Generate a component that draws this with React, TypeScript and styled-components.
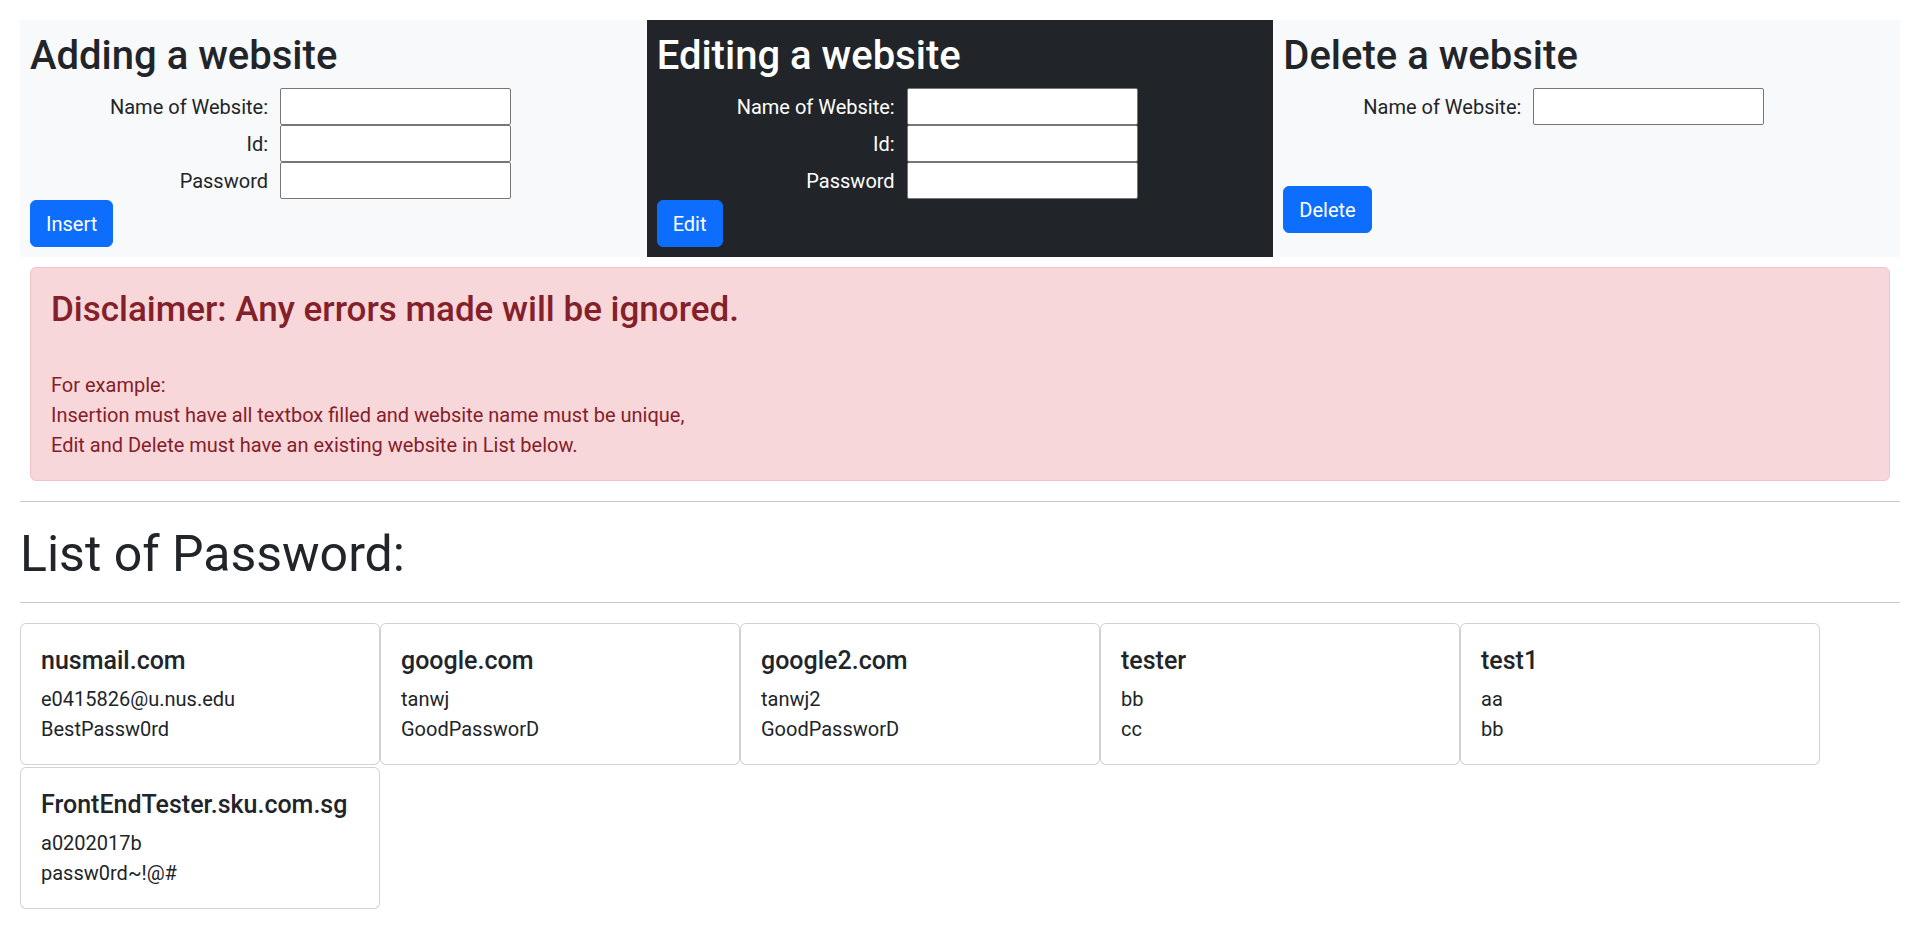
import React from "react";
import styled, { createGlobalStyle } from "styled-components";

const GlobalStyle = createGlobalStyle`
  html, body {
    margin: 0;
    padding: 0;
    background: #ffffff;
  }
  body {
    font-family: Roboto, "Noto Sans", "Liberation Sans", sans-serif;
    font-size: 20px;
    line-height: 30px;
    color: #212529;
  }
  *, *::before, *::after { box-sizing: border-box; }
`;

const Page = styled.div`
  padding: 20px;
`;

const TopRow = styled.div`
  display: grid;
  grid-template-columns: repeat(3, 1fr);
`;

const Panel = styled.section<{ $dark?: boolean }>`
  padding: 10px;
  background: ${(p) => (p.$dark ? "#212529" : "#f8f9fa")};
  color: ${(p) => (p.$dark ? "#ffffff" : "#212529")};
`;

const PanelTitle = styled.h2`
  margin: 0 0 10px;
  padding-top: 4px;
  font-size: 40px;
  line-height: 44px;
  font-weight: 500;
`;

const FormGrid = styled.div`
  display: grid;
  grid-template-columns: 238px 231px;
  column-gap: 12px;
  align-items: center;
`;

const FieldLabel = styled.label`
  text-align: right;
  font-size: 20px;
  line-height: 30px;
`;

const TextInput = styled.input`
  width: 231px;
  height: 37px;
  margin: 0;
  padding: 1px 2px;
  border: 1px solid #767676;
  border-radius: 2px;
  background: #ffffff;
  font: inherit;
  color: #212529;
`;

const Spacer = styled.div<{ $h: number }>`
  height: ${(p) => p.$h}px;
`;

const PrimaryButton = styled.button`
  display: inline-block;
  margin-top: 1px;
  padding: 7.5px 15px;
  border: 1px solid #0d6efd;
  border-radius: 6px;
  background: #0d6efd;
  color: #ffffff;
  font-family: inherit;
  font-size: 20px;
  line-height: 30px;
  cursor: pointer;
`;

const Alert = styled.div`
  margin: 10px 10px 20px;
  padding: 20px;
  border: 1px solid #f5c2c7;
  border-radius: 6px;
  background: #f8d7da;
  color: #842029;
`;

const AlertTitle = styled.h3`
  margin: 0 0 10px;
  padding-top: 2px;
  font-size: 35px;
  line-height: 40px;
  font-weight: 500;
`;

const AlertBody = styled.p`
  margin: 0;
  padding-top: 30px;
  font-size: 20px;
  line-height: 30px;
`;

const Divider = styled.hr`
  margin: 20px 0;
  border: 0;
  border-top: 1px solid #c8c9ca;
`;

const ListTitle = styled.h1`
  margin: 0 0 10px;
  padding-top: 4px;
  font-size: 50px;
  line-height: 56px;
  font-weight: 400;
`;

const CardGrid = styled.div`
  display: flex;
  flex-wrap: wrap;
  row-gap: 2px;
`;

const Card = styled.div`
  width: 360px;
  padding: 20px;
  border: 1px solid rgba(0, 0, 0, 0.175);
  border-radius: 6px;
  background: #ffffff;
`;

const CardTitle = styled.h5`
  margin: 0 0 10px;
  padding-top: 3px;
  font-size: 25px;
  line-height: 27px;
  font-weight: 500;
`;

const CardText = styled.p`
  margin: 0;
  font-size: 20px;
  line-height: 30px;
`;

type Entry = { site: string; id: string; password: string };

const entries: Entry[] = [
  { site: "nusmail.com", id: "e0415826@u.nus.edu", password: "BestPassw0rd" },
  { site: "google.com", id: "tanwj", password: "GoodPassworD" },
  { site: "google2.com", id: "tanwj2", password: "GoodPassworD" },
  { site: "tester", id: "bb", password: "cc" },
  { site: "test1", id: "aa", password: "bb" },
  { site: "FrontEndTester.sku.com.sg", id: "a0202017b", password: "passw0rd~!@#" },
];

const FullForm: React.FC = () => (
  <FormGrid>
    <FieldLabel>Name of Website:</FieldLabel>
    <TextInput type="text" />
    <FieldLabel>Id:</FieldLabel>
    <TextInput type="text" />
    <FieldLabel>Password</FieldLabel>
    <TextInput type="text" />
  </FormGrid>
);

export default function App() {
  return (
    <>
      <GlobalStyle />
      <Page>
        <TopRow>
          <Panel>
            <PanelTitle>Adding a website</PanelTitle>
            <FullForm />
            <PrimaryButton>Insert</PrimaryButton>
          </Panel>
          <Panel $dark>
            <PanelTitle>Editing a website</PanelTitle>
            <FullForm />
            <PrimaryButton>Edit</PrimaryButton>
          </Panel>
          <Panel>
            <PanelTitle>Delete a website</PanelTitle>
            <FormGrid>
              <FieldLabel>Name of Website:</FieldLabel>
              <TextInput type="text" />
            </FormGrid>
            <Spacer $h={60} />
            <PrimaryButton>Delete</PrimaryButton>
          </Panel>
        </TopRow>

        <Alert>
          <AlertTitle>Disclaimer: Any errors made will be ignored.</AlertTitle>
          <AlertBody>
            For example:
            <br />
            Insertion must have all textbox filled and website name must be unique,
            <br />
            Edit and Delete must have an existing website in List below.
          </AlertBody>
        </Alert>

        <Divider />
        <ListTitle>List of Password:</ListTitle>
        <Divider />

        <CardGrid>
          {entries.map((e) => (
            <Card key={e.site}>
              <CardTitle>{e.site}</CardTitle>
              <CardText>{e.id}</CardText>
              <CardText>{e.password}</CardText>
            </Card>
          ))}
        </CardGrid>
      </Page>
    </>
  );
}
